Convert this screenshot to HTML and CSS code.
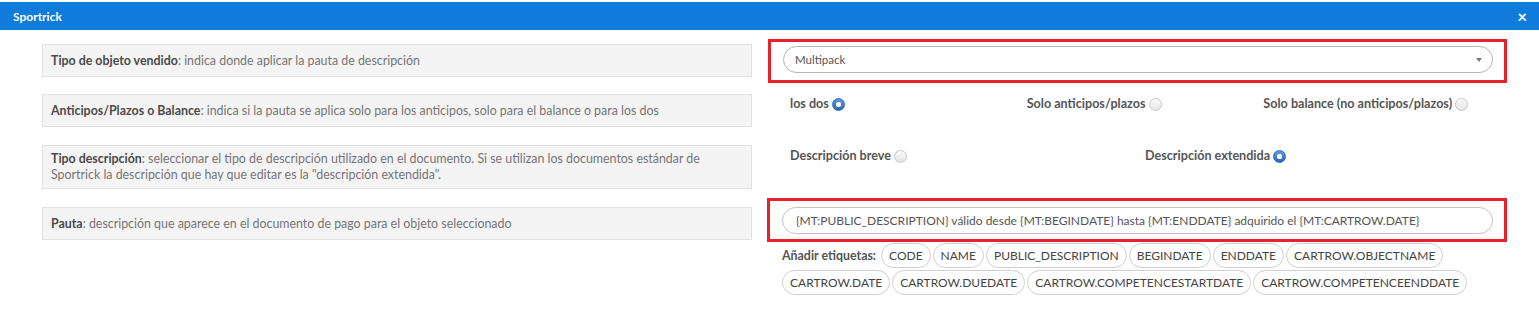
FILE: index.html
```html
<!DOCTYPE html>
<html lang="es">
<head>
    <meta charset="UTF-8">
    <meta name="viewport" content="width=device-width, initial-scale=1.0">
    <title>Sportrick</title>
    <link rel="stylesheet" href="styles.css">
</head>
<body>
    <div class="modal">
        <!-- Cabecera del diálogo -->
        <div class="modal-header">
            <span class="modal-title">Sportrick</span>
            <span class="close">&times;</span>
        </div>

        <div class="modal-body">
            <!-- Tipo de objeto -->
            <div class="row row-first">
                <div class="col-left">
                    <div class="help"><p><b>Tipo de objeto vendido</b>: indica donde aplicar la pauta de descripción</p></div>
                </div>
                <div class="col-right">
                    <div class="marked marked-select">
                        <div class="select">
                            <span>Multipack</span>
                            <span class="caret"></span>
                        </div>
                    </div>
                </div>
            </div>

            <!-- Anticipos / Plazos -->
            <div class="row row-second">
                <div class="col-left">
                    <div class="help"><p><b>Anticipos/Plazos o Balance</b>: indica si la pauta se aplica solo para los anticipos, solo para el balance o para los dos</p></div>
                </div>
                <div class="col-right">
                    <div class="radios radios-3">
                        <label class="radio">los dos <input type="radio" name="balance" checked></label>
                        <label class="radio">Solo anticipos/plazos <input type="radio" name="balance"></label>
                        <label class="radio">Solo balance (no anticipos/plazos) <input type="radio" name="balance"></label>
                    </div>
                </div>
            </div>

            <!-- Tipo descripción -->
            <div class="row row-third">
                <div class="col-left">
                    <div class="help"><p><b>Tipo descripción</b>: seleccionar el tipo de descripción utilizado en el documento. Si se utilizan los documentos estándar de <span>Sportrick la descripción que hay que editar es la "descripción extendida".</span></p></div>
                </div>
                <div class="col-right">
                    <div class="radios radios-2">
                        <label class="radio">Descripción breve <input type="radio" name="tipo"></label>
                        <label class="radio">Descripción extendida <input type="radio" name="tipo" checked></label>
                    </div>
                </div>
            </div>

            <!-- Pauta -->
            <div class="row row-fourth">
                <div class="col-left">
                    <div class="help"><p><b>Pauta</b>: descripción que aparece en el documento de pago para el objeto seleccionado</p></div>
                </div>
                <div class="col-right">
                    <div class="marked marked-input">
                        <input class="pauta" type="text" value="{MT:PUBLIC_DESCRIPTION} válido desde {MT:BEGINDATE} hasta {MT:ENDDATE} adquirido el {MT:CARTROW.DATE}">
                    </div>
                    <div class="tags">
                        <span class="tags-label">Añadir etiquetas:</span>
                        <span class="tag">CODE</span>
                        <span class="tag">NAME</span>
                        <span class="tag">PUBLIC_DESCRIPTION</span>
                        <span class="tag">BEGINDATE</span>
                        <span class="tag">ENDDATE</span>
                        <span class="tag">CARTROW.OBJECTNAME</span>
                        <span class="tag">CARTROW.DATE</span>
                        <span class="tag">CARTROW.DUEDATE</span>
                        <span class="tag">CARTROW.COMPETENCESTARTDATE</span>
                        <span class="tag">CARTROW.COMPETENCEENDDATE</span>
                    </div>
                </div>
            </div>
        </div>
    </div>
</body>
</html>
```

FILE: styles.css
```css
/* Grundstil */
* {
    box-sizing: border-box;
    margin: 0;
    padding: 0;
}

body {
    font-family: Lato, "Open Sans", sans-serif;
    font-size: 12px;
    color: #555;
    background-color: #fff;
}

.modal {
    padding-top: 2px;
}

/* Cabecera */
.modal-header {
    height: 28px;
    background-color: #0f7bdb;
    color: #fff;
    display: flex;
    align-items: center;
    justify-content: space-between;
    padding: 0 12px 0 13px;
}

.modal-title {
    font-weight: bold;
    font-size: 12px;
}

.close {
    font-weight: bold;
    font-size: 17px;
    line-height: 1;
}

.modal-body {
    padding: 9px 0 0 27px;
}

/* Filas */
.row {
    display: flex;
    align-items: flex-start;
}

.col-left {
    width: 710px;
    margin: 0 15px;
}

.col-right {
    width: 740px;
}

.row-first .help {
    margin-top: 5px;
}

.row-second {
    margin-top: 11px;
}

.row-third {
    margin-top: 18px;
}

.row-fourth {
    margin-top: 9px;
}

.row-fourth .help {
    margin-top: 9px;
}

.help {
    background-color: #f4f4f4;
    border: 1px solid #e2e2e2;
    min-height: 33px;
    padding: 5px 9px 5px 8px;
    display: flex;
    align-items: center;
    color: #747474;
}

.help p {
    font-size: 12.4px;
    line-height: 16px;
}

.help b {
    color: #4a4a4a;
    font-weight: bold;
}

/* Markierung (rot) */
.marked {
    border: 3px solid #e8222a;
    height: 44px;
    margin-left: 1px;
}

.marked-select {
    padding: 4px 11px 0 12px;
}

.marked-input {
    padding: 6px 11px 0 12px;
    margin-left: 0;
}

.select {
    height: 27px;
    border: 1px solid #b5b5b5;
    border-radius: 14px;
    display: flex;
    align-items: center;
    padding: 0 10px 0 11px;
    color: #555;
    font-size: 11.5px;
}

.caret {
    margin-left: auto;
    width: 0;
    height: 0;
    border-left: 3px solid transparent;
    border-right: 3px solid transparent;
    border-top: 4px solid #777;
}

.pauta {
    width: 100%;
    height: 27px;
    border: 1px solid #c4c4c4;
    border-radius: 14px;
    padding: 0 12px 0 13px;
    font-family: inherit;
    font-size: 12px;
    color: #555;
    outline: none;
}

/* Radiobuttons */
.radios {
    display: grid;
    padding: 0 15px;
}

.radios-3 {
    grid-template-columns: repeat(3, 1fr);
    padding-top: 2px;
}

.radios-2 {
    grid-template-columns: repeat(2, 1fr);
    padding-top: 3px;
}

.radio {
    display: flex;
    align-items: center;
    gap: 3px;
    padding-left: 8px;
    line-height: 16px;
    font-size: 12.6px;
    font-weight: bold;
    color: #555;
}

.radio input {
    appearance: none;
    -webkit-appearance: none;
    width: 13px;
    height: 13px;
    border-radius: 50%;
    border: 1px solid #c8c8c8;
    background: linear-gradient(#fafafa, #e4e4e4);
    margin: 0;
}

.radio input:checked {
    border-color: #2f6db5;
    background: radial-gradient(circle, #fff 0 2.5px, transparent 3px), linear-gradient(#5b9be0, #2a67b2);
}

/* Etiquetas */
.tags {
    display: flex;
    flex-wrap: wrap;
    align-items: center;
    gap: 2px;
    padding: 1px 0 0 15px;
    width: 725px;
}

.tags-label {
    font-weight: bold;
    font-size: 12.4px;
    color: #555;
    margin-right: 3px;
}

.tag {
    height: 25px;
    border: 1px solid #cfcfcf;
    border-radius: 13px;
    padding: 0 7px;
    display: flex;
    align-items: center;
    color: #444;
}
```
